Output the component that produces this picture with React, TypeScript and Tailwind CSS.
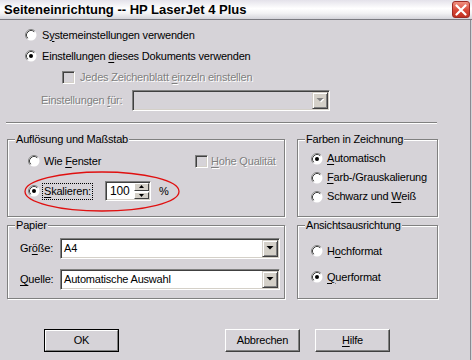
import React from "react";

const Radio = ({ checked }: { checked?: boolean }) => (
  <svg width="12" height="12" viewBox="0 0 12 12" className="shrink-0">
    <circle cx="6" cy="6" r="5.5" fill="#ffffff" />
    <path d="M2.11 9.89 A5.5 5.5 0 0 1 9.89 2.11" fill="none" stroke="#808080" strokeWidth="1" />
    <path d="M2.82 9.18 A4.5 4.5 0 0 1 9.18 2.82" fill="none" stroke="#404040" strokeWidth="1" />
    {checked && <circle cx="6" cy="6" r="2" fill="#000000" />}
  </svg>
);

const DisabledCheck = () => (
  <div className="w-[13px] h-[13px] shrink-0 border border-t-[#808080] border-l-[#808080] border-b-white border-r-white shadow-[inset_1px_1px_0_#404040,inset_-1px_-1px_0_#d4d0c8]" />
);

const U = ({ children }: { children: React.ReactNode }) => (
  <span className="underline underline-offset-[2px] decoration-[1px]">{children}</span>
);

const Tri = ({ disabled }: { disabled?: boolean }) => (
  <svg width="8" height="5" viewBox="0 0 8 5">
    {disabled && <path d="M1.5 1 L8.5 1 L5 4.5 Z" fill="#ffffff" />}
    <path d="M0.5 0 L7.5 0 L4 3.5 Z" fill={disabled ? "#808080" : "#000000"} />
  </svg>
);

const DropBtn = ({ disabled }: { disabled?: boolean }) => (
  <div className="w-[16px] h-[17px] shrink-0 bg-[#d4d0c8] border border-t-[#d4d0c8] border-l-[#d4d0c8] border-b-[#404040] border-r-[#404040] shadow-[inset_1px_1px_0_#ffffff,inset_-1px_-1px_0_#808080] flex items-center justify-center">
    <Tri disabled={disabled} />
  </div>
);

const Combo = ({
  w,
  text,
  disabled,
}: {
  w: string;
  text?: string;
  disabled?: boolean;
}) => (
  <div
    className={`${w} h-[21px] shrink-0 border border-t-[#808080] border-l-[#808080] border-b-white border-r-white shadow-[inset_1px_1px_0_#404040,inset_-1px_-1px_0_#d4d0c8] p-[1px] pl-[2px] flex items-center ${
      disabled ? "bg-[#d6d3d8]" : "bg-white"
    }`}
  >
    <div className="flex-1 pl-[1px] text-black">{text}</div>
    <DropBtn disabled={disabled} />
  </div>
);

const SpinBtn = ({ up }: { up?: boolean }) => (
  <div className="h-[8px] w-[15px] bg-[#d4d0c8] border border-t-[#ffffff] border-l-[#ffffff] border-b-[#404040] border-r-[#404040] flex items-center justify-center">
    <svg width="5" height="3" viewBox="0 0 5 3">
      {up ? <path d="M0 3 L5 3 L2.5 0 Z" fill="#000" /> : <path d="M0 0 L5 0 L2.5 3 Z" fill="#000" />}
    </svg>
  </div>
);

const Spin = () => (
  <div className="w-[46px] h-[20px] shrink-0 bg-white border border-t-[#808080] border-l-[#808080] border-b-white border-r-white shadow-[inset_1px_1px_0_#404040,inset_-1px_-1px_0_#d4d0c8] p-[1px] flex items-center">
    <div className="flex-1 pl-[3px] text-[12px]">100</div>
    <div className="flex flex-col justify-between h-full py-[0px] gap-[1px]">
      <SpinBtn up />
      <SpinBtn />
    </div>
  </div>
);

const Group = ({
  title,
  w,
  h,
  children,
}: {
  title: string;
  w: string;
  h: string;
  children: React.ReactNode;
}) => (
  <div
    className={`${w} ${h} relative shrink-0 border border-[#808080] shadow-[1px_1px_0_#ffffff,inset_1px_1px_0_#ffffff] flex flex-col`}
  >
    <div className="-mt-[7px] ml-[7px] w-fit px-[1px] h-[13px] leading-[13px] bg-[#d6d3d8]">{title}</div>
    {children}
  </div>
);

const Button = ({ children, def }: { children: React.ReactNode; def?: boolean }) =>
  def ? (
    <div className="w-[75px] h-[23px] border border-black shrink-0">
      <div className="w-full h-full border border-t-white border-l-white border-b-[#808080] border-r-[#808080] flex items-center justify-center">
        {children}
      </div>
    </div>
  ) : (
    <div className="w-[75px] h-[23px] shrink-0 border border-t-white border-l-white border-b-[#404040] border-r-[#404040] shadow-[inset_-1px_-1px_0_#808080] flex items-center justify-center">
      {children}
    </div>
  );

const dis = "text-[#808080] [text-shadow:1px_1px_0_#ffffff]";

export default function App() {
  return (
    <div className="w-[472px] h-[360px] overflow-hidden bg-[#d6d3d8] text-black text-[11px] leading-none tracking-[-0.2px] font-['Liberation_Sans',Arial,sans-serif]">
      {/* Title bar */}
      <div className="h-[20px] flex items-center border-b border-[#7a7a80] bg-[linear-gradient(to_bottom,#e4e2ea,#ffffff_45%,#f2f2f4_70%,#d4d4da)]">
        <div className="pl-[4px] text-[13px] font-bold tracking-normal">Seiteneinrichtung -- HP LaserJet 4 Plus</div>
        <div className="ml-auto mr-[2px] w-[18px] h-[17px] rounded-[3px] border border-[#9c2a24] bg-[linear-gradient(to_bottom,#f09080,#d84838_55%,#c03020)] flex items-center justify-center">
          <svg width="12" height="12" viewBox="0 0 12 12">
            <path d="M1.5 1.5 L10.5 10.5 M10.5 1.5 L1.5 10.5" stroke="#ffffff" strokeWidth="2.2" strokeLinecap="round" />
          </svg>
        </div>
      </div>

      {/* Body */}
      <div className="w-[471px] h-[340px] border-r border-[#8c8a92] flex flex-col">
        <div className="mt-[5px] h-[20px] pl-[25px] flex items-center gap-[5px]">
          <Radio />
          <span>
            S<U>y</U>stemeinstellungen verwenden
          </span>
        </div>
        <div className="mt-[1px] h-[20px] pl-[25px] flex items-center gap-[5px]">
          <Radio checked />
          <span>
            Einstellungen <U>d</U>ieses Dokuments verwenden
          </span>
        </div>
        <div className="mt-[1px] h-[20px] pl-[62px] flex items-center gap-[5px]">
          <DisabledCheck />
          <span className={dis}>
            Jedes Zeichenblatt <U>e</U>inzeln einstellen
          </span>
        </div>
        <div className="mt-[3px] h-[21px] pl-[41px] flex items-center">
          <div className={`w-[91px] ${dis}`}>
            Einstellungen <U>f</U>ür:
          </div>
          <Combo w="w-[198px]" disabled />
        </div>
        <div className="mt-[11px] ml-[6px] w-[431px] h-[2px] border-t border-[#808080] border-b border-b-white" />

        {/* Row 1 groups */}
        <div className="mt-[15px] pl-[7px] flex gap-[12px]">
          <Group title="Auflösung und Maßstab" w="w-[278px]" h="h-[78px]">
            <div className="mt-[5px] h-[20px] pl-[20px] flex items-center">
              <div className="w-[167px] flex items-center gap-[4px]">
                <Radio />
                <span>
                  Wie <U>F</U>enster
                </span>
              </div>
              <div className="flex items-center gap-[3px]">
                <DisabledCheck />
                <span className={dis}>
                  <U>H</U>ohe Qualität
                </span>
              </div>
            </div>
            <div className="mt-[10px] h-[20px] pl-[20px] flex items-center">
              <div className="w-[77px] flex items-center gap-[3px]">
                <Radio checked />
                <span className="outline outline-1 outline-dotted outline-black px-[1px] py-[2px]">
                  <U>S</U>kalieren:
                </span>
              </div>
              <Spin />
              <span className="ml-[8px]">%</span>
            </div>
            <svg
              className="absolute left-[16px] top-[31px] pointer-events-none"
              width="156"
              height="41"
              viewBox="0 0 156 41"
            >
              <ellipse cx="78" cy="20.5" rx="77" ry="19.5" fill="none" stroke="#e01010" strokeWidth="1.3" />
            </svg>
          </Group>
          <Group title="Farben in Zeichnung" w="w-[141px]" h="h-[78px]">
            <div className="mt-[3px] h-[19px] pl-[13px] flex items-center gap-[4px]">
              <Radio checked />
              <span>
                <U>A</U>utomatisch
              </span>
            </div>
            <div className="h-[19px] pl-[13px] flex items-center gap-[4px]">
              <Radio />
              <span>
                <U>F</U>arb-/Grauskalierung
              </span>
            </div>
            <div className="h-[19px] pl-[13px] flex items-center gap-[4px]">
              <Radio />
              <span>
                Schwarz und <U>W</U>eiß
              </span>
            </div>
          </Group>
        </div>

        {/* Row 2 groups */}
        <div className="mt-[8px] pl-[7px] flex gap-[12px]">
          <Group title="Papier" w="w-[278px]" h="h-[74px]">
            <div className="mt-[6px] h-[21px] pl-[12px] flex items-center">
              <div className="w-[40px]">
                Gr<U>ö</U>ße:
              </div>
              <Combo w="w-[220px]" text="A4" />
            </div>
            <div className="mt-[10px] h-[21px] pl-[12px] flex items-center">
              <div className="w-[40px]">
                <U>Q</U>uelle:
              </div>
              <Combo w="w-[220px]" text="Automatische Auswahl" />
            </div>
          </Group>
          <Group title="Ansichtsausrichtung" w="w-[141px]" h="h-[74px]">
            <div className="mt-[9px] h-[20px] pl-[13px] flex items-center gap-[4px]">
              <Radio />
              <span>
                H<U>o</U>chformat
              </span>
            </div>
            <div className="mt-[6px] h-[20px] pl-[13px] flex items-center gap-[4px]">
              <Radio checked />
              <span>
                <U>Q</U>uerformat
              </span>
            </div>
          </Group>
        </div>

        {/* Buttons */}
        <div className="mt-[30px] pl-[44px] flex">
          <Button def>OK</Button>
          <div className="ml-[106px]">
            <Button>Abbrechen</Button>
          </div>
          <div className="ml-[15px]">
            <Button>
              <U>H</U>ilfe
            </Button>
          </div>
        </div>
      </div>
    </div>
  );
}
